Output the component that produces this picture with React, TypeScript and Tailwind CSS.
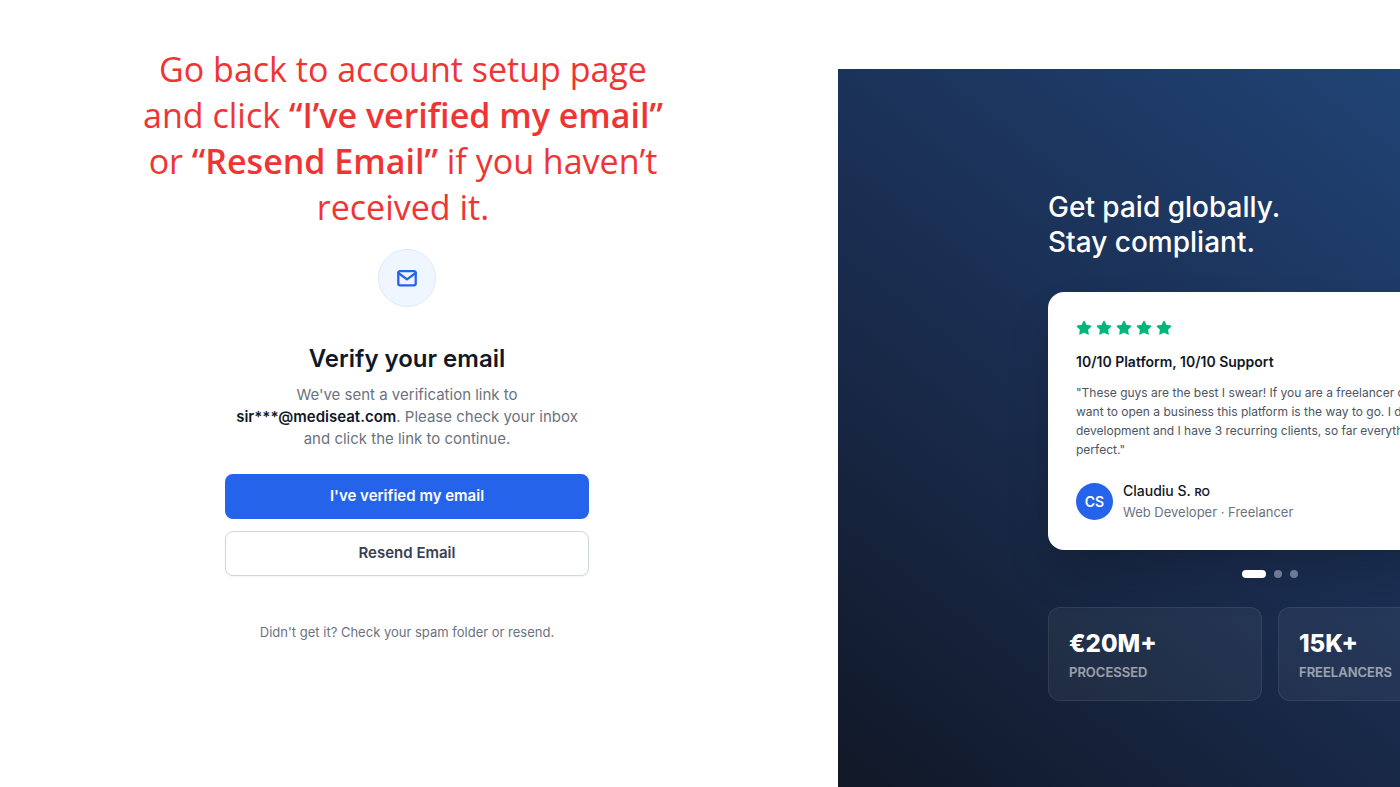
const stats = [
  { value: "€20M+", label: "Processed" },
  { value: "15K+", label: "Freelancers" },
];

const App = () => {
  return (
    <main className="grid min-h-screen grid-cols-[838fr_562fr] bg-white font-['Inter',sans-serif]">
      <section className="flex flex-col items-center pt-[46px]">
        <Instructions />
        <VerifyEmail />
      </section>

      <aside className="mt-[69px] overflow-hidden bg-linear-[38deg,#111827_0%,#1a2d50_50%,#204375_100%] pt-[121px] pl-[210px]">
        <div className="w-[444px]">
          <h2 className="text-[28px] leading-[35px] font-medium text-white">
            Get paid globally.
            <br />
            Stay compliant.
          </h2>

          <Testimonial />

          <div className="mt-5 flex items-center justify-center gap-2">
            <button aria-label="Testimonial 1" className="h-2 w-6 rounded-full bg-white" />
            <button aria-label="Testimonial 2" className="h-2 w-2 rounded-full bg-[#6c7a94]" />
            <button aria-label="Testimonial 3" className="h-2 w-2 rounded-full bg-[#6c7a94]" />
          </div>

          <div className="mt-[29px] grid grid-cols-2 gap-4">
            {stats.map((stat) => (
              <div key={stat.label} className="rounded-xl border border-white/8 bg-white/5 p-5">
                <p className="text-2xl font-extrabold text-white">{stat.value}</p>
                <p className="mt-1 text-[13px] leading-4 font-semibold text-white/55 uppercase">{stat.label}</p>
              </div>
            ))}
          </div>
        </div>
      </aside>
    </main>
  );
};

const Instructions = () => {
  return (
    <p className="pr-8 text-center font-['Open_Sans',sans-serif] text-[34px] leading-[46px] whitespace-nowrap text-[#f03434]">
      Go back to account setup page
      <br />
      and click <strong className="font-semibold">“I’ve verified my email”</strong>
      <br />
      or <strong className="font-semibold">“Resend Email”</strong> if you haven’t
      <br />
      received it.
    </p>
  );
};

const VerifyEmail = () => {
  return (
    <div className="flex flex-col items-center pt-[19px] pr-6 text-center">
      <div className="flex h-[58px] w-[58px] items-center justify-center rounded-full border border-blue-100 bg-[#eff6ff]">
        <MailIcon />
      </div>

      <h1 className="mt-9 text-2xl leading-8 font-semibold text-[#111827]">Verify your email</h1>
      <p className="mt-[9px] w-[364px] text-[15px] leading-[22px] text-[#6b7280]">
        We've sent a verification link to
        <br />
        <strong className="font-semibold text-[#111827]">sir***@mediseat.com</strong>. Please check your inbox
        <br />
        and click the link to continue.
      </p>

      <button className="mt-6 h-[45px] w-[364px] rounded-lg bg-[#2563eb] text-[15px] font-semibold text-white">
        I've verified my email
      </button>
      <button className="mt-3 h-[45px] w-[364px] rounded-lg border border-gray-300 bg-white text-[15px] font-semibold text-[#374151] shadow-xs">
        Resend Email
      </button>

      <p className="mt-12 text-[13px] leading-4 text-[#6b7280]">Didn't get it? Check your spam folder or resend.</p>
    </div>
  );
};

const Testimonial = () => {
  return (
    <article className="mt-8 rounded-2xl bg-white p-7 shadow-2xl">
      <div className="flex gap-1" role="img" aria-label="5 out of 5 stars">
        {[1, 2, 3, 4, 5].map((n) => (
          <Star key={n} />
        ))}
      </div>
      <h3 className="mt-4 text-sm leading-5 font-semibold text-[#111827]">10/10 Platform, 10/10 Support</h3>
      <p className="mt-[11px] text-xs leading-[19px] text-[#4b5563]">
        "These guys are the best I swear! If you are a freelancer or if you want to open a business this platform is the
        way to go. I do web development and I have 3 recurring clients, so far everything is perfect."
      </p>
      <div className="mt-[22px] flex items-center gap-[10px]">
        <span className="flex h-[37px] w-[37px] items-center justify-center rounded-full bg-[#2563eb] text-sm font-semibold text-white">
          CS
        </span>
        <div>
          <p className="text-sm leading-5 font-medium text-[#111827]">
            Claudiu S. <span className="text-[11px] font-semibold">RO</span>
          </p>
          <p className="text-[13px] leading-5 text-[#6b7280]">Web Developer · Freelancer</p>
        </div>
      </div>
    </article>
  );
};

const MailIcon = () => {
  return (
    <svg
      viewBox="0 0 24 24"
      className="h-[22px] w-[22px] fill-none stroke-[#2563eb] stroke-[2.5]"
      strokeLinecap="round"
      strokeLinejoin="round"
    >
      <rect x="2.5" y="4.5" width="19" height="15.5" rx="2" />
      <path d="M21.5 6.5 12 13.5 2.5 6.5" />
    </svg>
  );
};

const Star = () => {
  return (
    <svg viewBox="0 0 24 24" className="h-4 w-4 fill-[#00b67a] stroke-[#00b67a] stroke-2" strokeLinejoin="round">
      <path d="M12 2l3.09 6.26L22 9.27l-5 4.87 1.18 6.88L12 17.77l-6.18 3.25L7 14.14 2 9.27l6.91-1.01L12 2z" />
    </svg>
  );
};

export default App;
